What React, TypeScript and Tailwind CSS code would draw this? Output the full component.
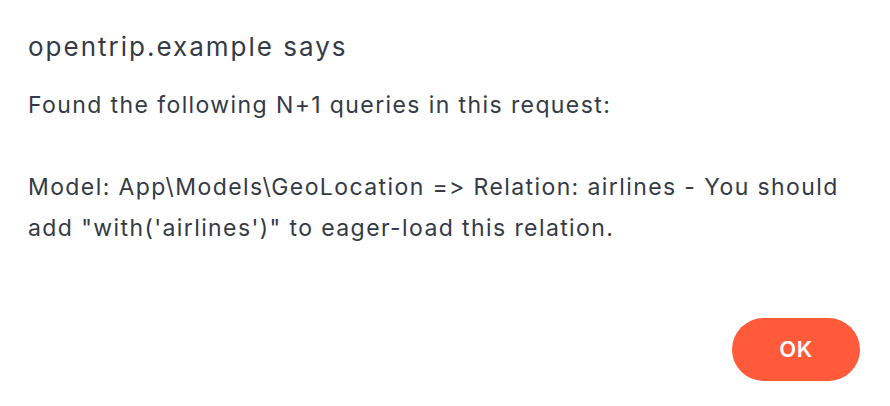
export default function App() {
  return (
    <div
      className="w-[890px] h-[406px] bg-white flex flex-col px-[28px] pt-[27px] pb-[25px] text-[#343a46] [font-feature-settings:'calt'_0,'liga'_0] [font-variation-settings:'opsz'_14]"
      style={{ fontFamily: "Inter, 'Noto Sans', sans-serif" }}
    >
      <div className="text-[26px] leading-[40px] tracking-[2px] whitespace-nowrap">opentrip.example says</div>
      <div className="mt-[18px] text-[23px] leading-[41px] tracking-[1.4px] whitespace-nowrap">
        <div>Found the following N+1 queries in this request:</div>
        <div>&nbsp;</div>
        <div>Model: App\Models\GeoLocation =&gt; Relation: airlines - You should</div>
        <div>add "with('airlines')" to eager-load this relation.</div>
      </div>
      <div className="flex-1" />
      <div className="flex justify-end pr-[2px]">
        <button className="w-[128px] h-[63px] rounded-full bg-[#ff5a3a] text-white text-[22px] font-semibold tracking-[0.5px]">
          OK
        </button>
      </div>
    </div>
  );
}
